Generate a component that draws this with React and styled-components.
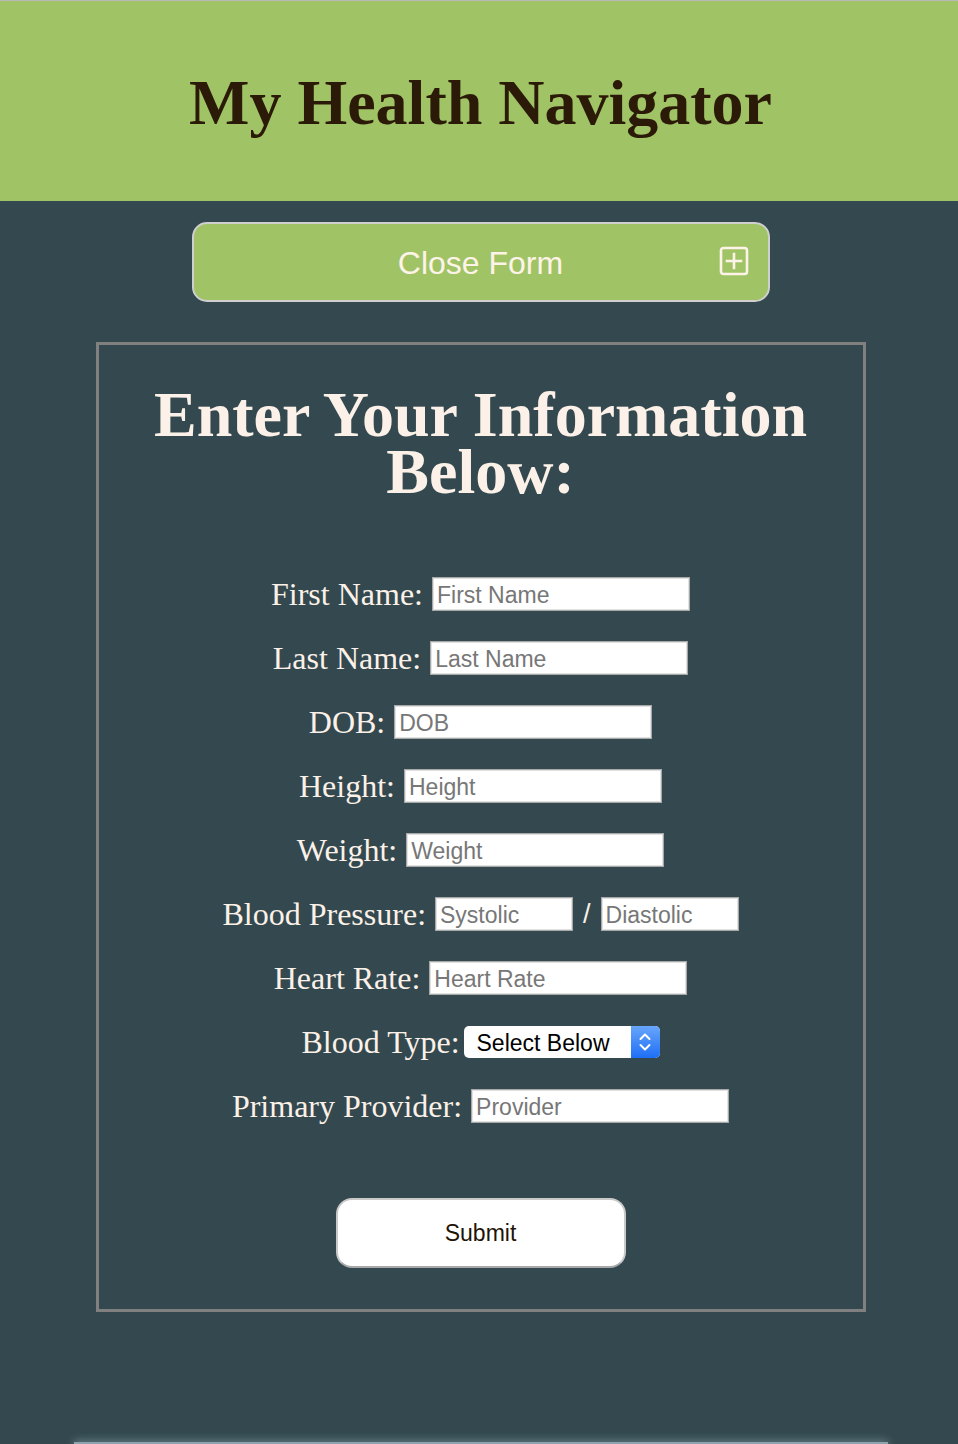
import React from "react";
import styled, { createGlobalStyle } from "styled-components";

const Global = createGlobalStyle`
  html, body { margin: 0; padding: 0; }
  body {
    background: #33494f;
    font-family: "Liberation Serif", "Times New Roman", serif;
    overflow: hidden;
  }
`;

const Page = styled.div`
  min-height: 1444px;
  padding-left: 3px;
  display: flex;
  flex-direction: column;
  align-items: center;
`;

const Header = styled.header`
  align-self: stretch;
  margin-left: -3px;
  padding-left: 3px;
  height: 200px;
  border-top: 1px solid #b9b9b9;
  background: #a0c465;
  display: flex;
  align-items: center;
  justify-content: center;
`;

const Title = styled.h1`
  margin: 0;
  font-family: "Liberation Serif", "Times New Roman", serif;
  font-weight: 700;
  font-size: 64px;
  color: #2b1a08;
  line-height: 1;
  transform: translateY(2px);
`;

const ToggleButton = styled.button`
  position: relative;
  margin-top: 21px;
  width: 578px;
  height: 80px;
  box-sizing: border-box;
  background: #a0c465;
  border: 2px solid #cfcfcf;
  border-radius: 15px;
  color: #fdf3e8;
  font-family: "Liberation Sans", Arial, sans-serif;
  font-size: 32px;
  display: flex;
  align-items: center;
  justify-content: center;
  padding: 3px 0 0;
  cursor: pointer;
`;

const ToggleIcon = styled.svg`
  position: absolute;
  right: 19px;
  top: 22px;
  width: 30px;
  height: 30px;
`;

const FormBox = styled.form`
  margin-top: 40px;
  width: 770px;
  box-sizing: border-box;
  border: 3px solid #808080;
  padding: 41px 0 41px;
  display: flex;
  flex-direction: column;
  align-items: center;
`;

const FormTitle = styled.h2`
  margin: 0 0 62px;
  font-family: "Liberation Serif", "Times New Roman", serif;
  font-weight: 700;
  font-size: 64px;
  line-height: 57px;
  color: #fcf1e8;
  text-align: center;
`;

const Row = styled.div`
  height: 64px;
  display: flex;
  align-items: center;
  justify-content: center;
  gap: ${(p) => (p.$tight ? "4px" : "9px")};
`;

const Label = styled.label`
  font-family: "Liberation Serif", "Times New Roman", serif;
  font-size: 32px;
  color: #fcf1e8;
  white-space: nowrap;
`;

const TextInput = styled.input`
  width: ${(p) => p.$w || 258}px;
  height: 34px;
  box-sizing: border-box;
  border: 1px solid #a8a8a8;
  box-shadow: inset 0 0 0 1px #e2e2e2;
  background: #fff;
  padding: 3px 4px 0;
  font-family: "Liberation Sans", Arial, sans-serif;
  font-size: 23px;
  color: #222;
  outline: none;
  &::placeholder { color: #777; }
`;

const Slash = styled.span`
  font-family: "Liberation Sans", Arial, sans-serif;
  font-size: 27px;
  color: #fcf1e8;
  margin: 0 1px;
`;

const SelectWrap = styled.div`
  position: relative;
  width: 196px;
  height: 32px;
`;

const Select = styled.select`
  appearance: none;
  -webkit-appearance: none;
  width: 100%;
  height: 100%;
  border: none;
  border-radius: 5px;
  background: #fff;
  padding: 1px 0 0 13px;
  font-family: "Liberation Sans", Arial, sans-serif;
  font-size: 23px;
  color: #000;
  outline: none;
`;

const Stepper = styled.span`
  position: absolute;
  right: 0;
  top: 0;
  width: 29px;
  height: 32px;
  border-radius: 0 5px 5px 0;
  background: linear-gradient(#68a6fb, #1e6ff6);
  display: flex;
  align-items: center;
  justify-content: center;
  pointer-events: none;
`;

const SubmitButton = styled.button`
  margin-top: 60px;
  width: 290px;
  height: 70px;
  box-sizing: border-box;
  background: #fff;
  border: 2px solid #c9c9c9;
  border-bottom-color: #a8a8a8;
  border-radius: 16px;
  font-family: "Liberation Sans", Arial, sans-serif;
  font-size: 23px;
  color: #1f1406;
  padding: 1px 0 0;
  cursor: pointer;
`;

const Footer = styled.div`
  margin-top: 130px;
  width: 814px;
  height: 30px;
  background: #8ea3ad;
  box-shadow: 0 -2px 8px rgba(150, 175, 185, 0.45);
`;

const fields = [
  { label: "First Name:", ph: "First Name" },
  { label: "Last Name:", ph: "Last Name" },
  { label: "DOB:", ph: "DOB" },
  { label: "Height:", ph: "Height" },
  { label: "Weight:", ph: "Weight" },
];

export default function App() {
  return (
    <Page>
      <Global />
      <Header>
        <Title>My Health Navigator</Title>
      </Header>

      <ToggleButton type="button">
        Close Form
        <ToggleIcon viewBox="0 0 30 30" fill="none" stroke="#fdf3e8" strokeWidth="2.6">
          <rect x="2" y="2" width="26" height="26" rx="2.5" />
          <path d="M15 8v14M8 15h14" strokeLinecap="square" />
        </ToggleIcon>
      </ToggleButton>

      <FormBox onSubmit={(e) => e.preventDefault()}>
        <FormTitle>
          Enter Your Information
          <br />
          Below:
        </FormTitle>

        {fields.map((f) => (
          <Row key={f.label}>
            <Label>{f.label}</Label>
            <TextInput placeholder={f.ph} />
          </Row>
        ))}

        <Row>
          <Label>Blood Pressure:</Label>
          <TextInput $w={138} placeholder="Systolic" />
          <Slash>/</Slash>
          <TextInput $w={138} placeholder="Diastolic" />
        </Row>

        <Row>
          <Label>Heart Rate:</Label>
          <TextInput placeholder="Heart Rate" />
        </Row>

        <Row $tight>
          <Label>Blood Type:</Label>
          <SelectWrap>
            <Select defaultValue="">
              <option value="">Select Below</option>
              <option>A+</option>
              <option>A-</option>
              <option>B+</option>
              <option>B-</option>
              <option>AB+</option>
              <option>AB-</option>
              <option>O+</option>
              <option>O-</option>
            </Select>
            <Stepper>
              <svg width="14" height="22" viewBox="0 0 14 22" fill="none" stroke="#fff" strokeWidth="2" strokeLinecap="round" strokeLinejoin="round">
                <path d="M2.5 8 7 3.5 11.5 8" />
                <path d="M2.5 14 7 18.5 11.5 14" />
              </svg>
            </Stepper>
          </SelectWrap>
        </Row>

        <Row>
          <Label>Primary Provider:</Label>
          <TextInput placeholder="Provider" />
        </Row>

        <SubmitButton type="submit">Submit</SubmitButton>
      </FormBox>

      <Footer />
    </Page>
  );
}
